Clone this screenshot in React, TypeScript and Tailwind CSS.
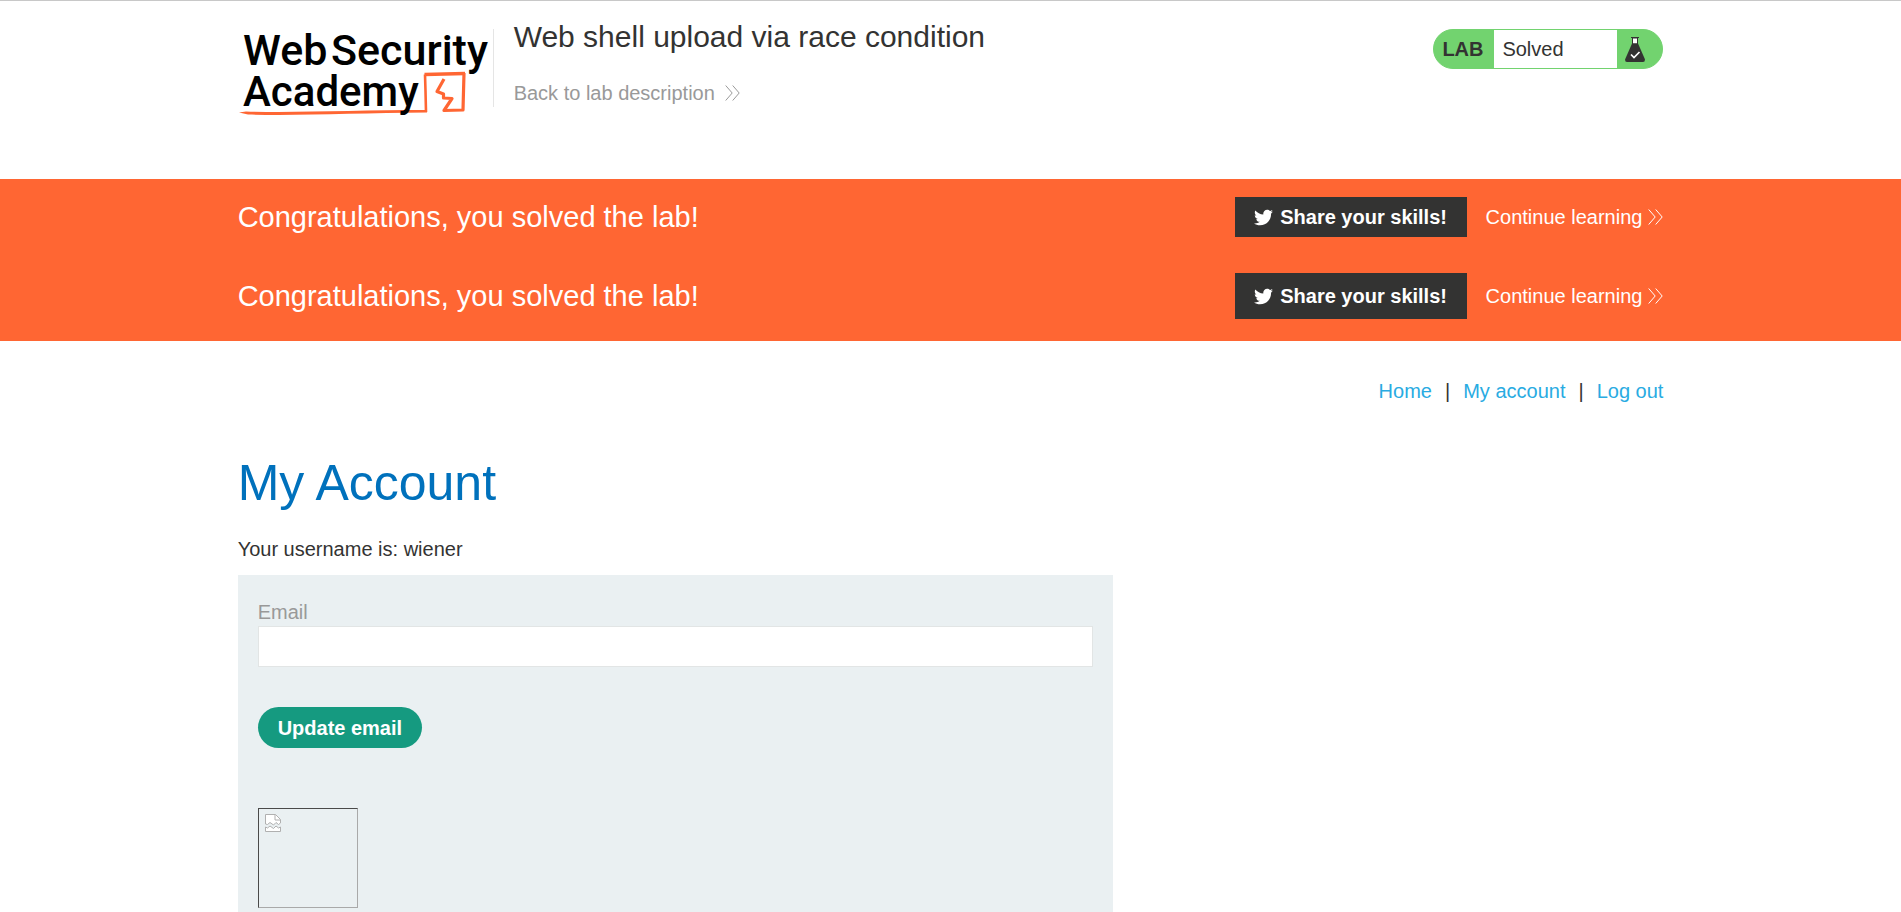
import React from "react";
import { FaTwitter } from "react-icons/fa";

function DoubleChevron({ className }: { className: string }) {
  return (
    <svg viewBox="0 0 15 16" className={className} fill="none" stroke="currentColor" strokeWidth="1" aria-hidden="true">
      <path d="M0.7 0.5 7.2 8 0.7 15.5M7.7 0.5 14.2 8 7.7 15.5" />
    </svg>
  );
}

function Logo() {
  return (
    <svg viewBox="0 0 255 100" className="h-[100px] w-[255px] shrink-0 overflow-visible" role="img" aria-label="Web Security Academy">
      <g fill="none" stroke="#ff6633" strokeLinejoin="round">
        <path d="M1 91.500 8 90.500C60 92 120 89 189 89L189 91.500C120 92 60 95 10 93.500z" fill="#ff6633" stroke="none" />
        <path d="M188 91 187.500 70 187 53.500" strokeWidth="2.600" />
        <path d="M186.500 53.500 227 52.500" strokeWidth="3.400" />
        <path d="M226 52 225 89 206 89.500 214 77.500 205.500 77 205.500 73 199 70.500 206 58" strokeWidth="3.200" />
      </g>
      <g fill="#000" fontFamily="Roboto, sans-serif" fontWeight="500" fontSize="43">
        <text x="5" y="44">Web</text>
        <text x="93" y="44">Security</text>
        <text x="5" y="85" fontSize="42">Academy</text>
      </g>
    </svg>
  );
}

function Flask() {
  return (
    <svg viewBox="0 0 20 25" className="ml-2 h-[25px] w-[20px]" aria-hidden="true">
      <path d="M7.500 1h5v6h-5z" fill="#fff" stroke="#333332" strokeWidth="1" />
      <path d="M6 .5h8" stroke="#333332" />
      <path d="M7 6.500h6l7 16q0 2.500-2 2.500H2q-2 0-2-2.500z" fill="#333332" />
      <path d="m6 17.500 3 3 5.500-5.500" fill="none" stroke="#fff" strokeWidth="1.700" />
    </svg>
  );
}

function SolvedRow({ tall = false }: { tall?: boolean }) {
  return (
    <div className="flex items-center justify-between">
      <h4 className="text-[29px] leading-9">Congratulations, you solved the lab!</h4>
      <div className="flex items-center">
        <button
          type="button"
          className={`flex w-[232px] items-center justify-center gap-[7px] bg-[#333332] text-[20px] font-bold ${tall ? "h-[46px]" : "h-10"}`}
        >
          <FaTwitter className="size-[19px]" />
          Share your skills!
        </button>
        <a href="#learn" className="ml-[19px] flex items-center gap-[6px] text-[20px]">
          Continue learning
          <DoubleChevron className="h-4 w-[15px]" />
        </a>
      </div>
    </div>
  );
}

export default function App() {
  return (
    <div className="flex min-h-screen flex-col border-t border-[#c8c8c8] bg-white text-[20px] leading-7 text-[#333332] [font-family:'Liberation_Sans',Arial,sans-serif]">
      <header className="mx-auto flex h-[178px] w-3/4 items-start pt-5">
        <Logo />
        <div className="mt-2 h-[78px] border-l border-[#e5e5e5] pl-5">
          <h2 className="-mt-[10px] text-[30px] leading-9">Web shell upload via race condition</h2>
          <a href="#lab" className="mt-6 flex items-center gap-[10px] text-[#999]">
            Back to lab description
            <DoubleChevron className="h-4 w-[15px]" />
          </a>
        </div>
        <div className="mt-2 ml-auto flex h-10 w-[230px] items-stretch overflow-hidden rounded-full border border-[#72d36f] bg-[#72d36f]">
          <p className="flex w-[60px] items-center pl-2 font-bold">LAB</p>
          <p className="flex w-[123px] items-center bg-white pl-2">Solved</p>
          <span className="flex items-center">
            <Flask />
          </span>
        </div>
      </header>

      <section className="bg-[#ff6633] pt-[18px] pb-[22px] text-white">
        <div className="mx-auto flex w-3/4 flex-col gap-9">
          <SolvedRow />
          <SolvedRow tall />
        </div>
      </section>

      <main className="mx-auto flex w-3/4 grow flex-col">
        <nav className="mt-9 flex justify-end gap-[13px]">
          <a href="#home" className="text-[#29abe2]">Home</a>
          <span>|</span>
          <a href="#account" className="text-[#29abe2]">My account</a>
          <span>|</span>
          <a href="#logout" className="text-[#29abe2]">Log out</a>
        </nav>
        <h1 className="mt-12 text-[50px] leading-[60px] text-[#0071bc]">My Account</h1>
        <p className="mt-[22px]">Your username is: wiener</p>
        <form className="mt-3 flex w-[875px] grow flex-col items-start bg-[#eaf0f2] px-5 pt-[23px]" onSubmit={(e: React.FormEvent) => e.preventDefault()}>
          <label htmlFor="email" className="text-[#999]">Email</label>
          <input id="email" type="email" className="h-[41px] w-full border border-[#e2e5e5] bg-white px-2 outline-none" />
          <button type="submit" className="mt-10 h-[41px] rounded-full bg-[#159a80] px-5 font-bold text-white">
            Update email
          </button>
          <div role="img" aria-label="Avatar" className="mt-[60px] size-[100px] border border-t-[#4a4a4a] border-r-[#a9a9a9] border-b-[#a9a9a9] border-l-[#4a4a4a] pt-[5px] pl-[6px]">
            <svg viewBox="0 0 16 18" className="h-[18px] w-4" aria-hidden="true">
              <path d="M.5 10V.5h10l5 5V9l-2 1.500L11 8.500 8.500 11 5 8.500 2.500 10.500z" fill="#fff" stroke="#b0b0b0" />
              <path d="M10 .5V6h5.500" fill="none" stroke="#b0b0b0" />
              <path d="M.5 17.500V13l2 1L5 12l3.500 2.500L11 12l2.500 2 2-1v4.500z" fill="#fff" stroke="#b0b0b0" />
            </svg>
          </div>
        </form>
      </main>
    </div>
  );
}
